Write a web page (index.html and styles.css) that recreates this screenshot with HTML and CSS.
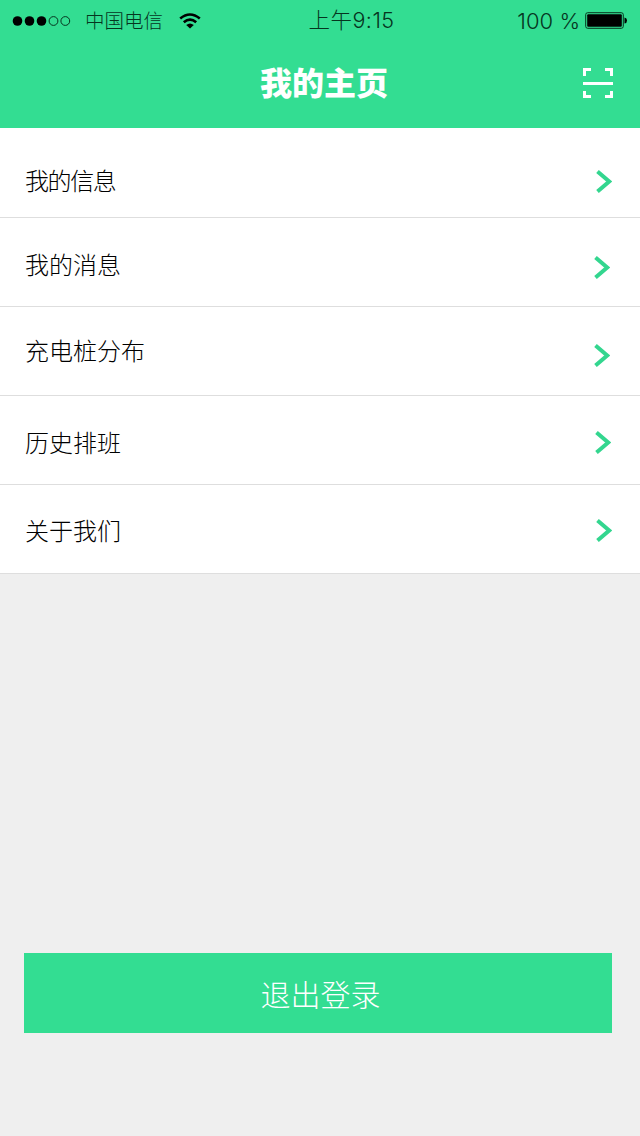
FILE: index.html
```
<!DOCTYPE html>
<html lang="zh-CN">
<head>
  <meta charset="UTF-8">
  <meta name="viewport" content="width=device-width, initial-scale=1.0">
  <title>我的主页</title>
  <link rel="stylesheet" href="styles.css">
</head>
<body>
<header>
  <!--状态栏-->
  <div class="status">
    <div class="carrier">
      <svg class="signal" width="60" height="12" viewBox="0 0 60 12">
        <circle cx="5.5" cy="6" r="4.8"/>
        <circle cx="17.5" cy="6" r="4.8"/>
        <circle cx="29.5" cy="6" r="4.8"/>
        <circle class="empty" cx="41.5" cy="6" r="4.4"/>
        <circle class="empty" cx="53.3" cy="6" r="4.4"/>
      </svg>
      <span class="operator">中国电信</span>
      <svg class="wifi" width="22" height="16" viewBox="0 0 22 16">
        <path d="M1.2 5.6Q11-2.6 20.8 5.6M4.8 9.3Q11 4 17.2 9.3"/>
        <path class="dot" d="M7.2 12Q11 9 14.8 12L11 15.6Z"/>
      </svg>
    </div>
    <span class="time">上午9:15</span>
    <div class="power">
      <span class="percent">100 %</span>
      <svg class="battery" width="43" height="17" viewBox="0 0 43 17">
        <rect class="shell" x=".7" y=".7" width="37.6" height="15.6" rx="2"/>
        <rect x="2.2" y="2.2" width="34.6" height="12.6" rx="1"/>
        <path d="M39.5 5.5Q42 6 42 8.5T39.5 11.5Z"/>
      </svg>
    </div>
  </div>
  <!--标题-->
  <div class="title">
    <h1>我的主页</h1>
    <a href="javascript:;" class="scan">
      <svg width="30" height="30" viewBox="0 0 30 30">
        <path d="M1.5 8V1.5H8M22 1.5H28.5V8M28.5 23V28.5H22M8 28.5H1.5V23M0 15.5H30"/>
      </svg>
    </a>
  </div>
</header>
<ul class="menu">
  <li class="info">
    <span>我的信息</span>
    <svg class="arrow" width="16" height="23" viewBox="0 0 16 23"><path d="M1.5 1.5L13.2 11.5L1.5 21.5"/></svg>
  </li>
  <li class="message">
    <span>我的消息</span>
    <svg class="arrow" width="16" height="23" viewBox="0 0 16 23"><path d="M1.5 1.5L13.2 11.5L1.5 21.5"/></svg>
  </li>
  <li class="station">
    <span>充电桩分布</span>
    <svg class="arrow" width="16" height="23" viewBox="0 0 16 23"><path d="M1.5 1.5L13.2 11.5L1.5 21.5"/></svg>
  </li>
  <li class="history">
    <span>历史排班</span>
    <svg class="arrow" width="16" height="23" viewBox="0 0 16 23"><path d="M1.5 1.5L13.2 11.5L1.5 21.5"/></svg>
  </li>
  <li class="about">
    <span>关于我们</span>
    <svg class="arrow" width="16" height="23" viewBox="0 0 16 23"><path d="M1.5 1.5L13.2 11.5L1.5 21.5"/></svg>
  </li>
</ul>
<a href="javascript:;" class="logout">退出登录</a>
</body>
</html>
```
FILE: styles.css
```
* {
  margin: 0;
  padding: 0;
  box-sizing: border-box;
}

body {
  min-height: 1136px;
  background: #efefef;
  font-family: "Noto Sans CJK SC", sans-serif;
  font-weight: 300;
  color: #000;
}

a {
  text-decoration: none;
}

svg {
  display: block;
  flex: none;
}

header {
  height: 128px;
  background: #33dd92;
}

/*状态栏*/
.status {
  display: grid;
  grid-template-columns: 1fr auto 1fr;
  height: 40px;
  padding: 0 12px;
  line-height: 40px;
  font-family: Inter, "Noto Sans CJK SC", sans-serif;
  font-size: 20px;
  color: #06351f;
}

.carrier,
.power {
  display: flex;
  align-items: center;
}

.signal .empty {
  fill: none;
  stroke: #06351f;
}

.operator {
  margin-left: 13px;
  padding-top: 1px;
  font-size: 19.5px;
}

.wifi {
  margin-left: 16px;
}

.wifi path {
  fill: none;
  stroke: #000;
  stroke-width: 2.6;
}

.wifi .dot {
  fill: #000;
  stroke: none;
}

.time {
  padding-left: 63px;
  font-size: 21.5px;
  letter-spacing: .5px;
}

.power {
  justify-content: flex-end;
}

.percent {
  margin-right: 5px;
  font-size: 22px;
}

.battery .shell {
  fill: none;
  stroke: #06351f;
}

/*标题*/
.title {
  display: grid;
  grid-template-columns: 1fr auto 1fr;
  align-items: center;
  height: 86px;
  padding: 0 27px 0 35px;
}

.title h1 {
  grid-column: 2;
  margin-bottom: 4px;
  font-size: 32px;
  font-weight: 900;
  line-height: 40px;
  color: #fff;
}

.scan {
  justify-self: end;
}

.scan path {
  fill: none;
  stroke: #fff;
  stroke-width: 3;
}

/*列表*/
.menu {
  list-style: none;
  background: #fff;
}

.menu li {
  display: flex;
  justify-content: space-between;
  align-items: flex-start;
  height: 89px;
  padding: 35px 29px 0 25px;
  border-bottom: 1px solid #dedede;
  font-size: 24px;
  line-height: 22px;
}

.arrow path {
  fill: none;
  stroke: #33d68f;
  stroke-width: 4;
}

.menu .info {
  height: 90px;
  padding-top: 41px;
  padding-right: 28px;
  letter-spacing: -1.4px;
}

.info .arrow {
  margin-top: 1px;
}

.menu .message {
  padding-right: 30px;
}

.message .arrow {
  margin-top: 3px;
}

.menu .station {
  padding-top: 32px;
  padding-right: 30px;
}

.station .arrow {
  margin-top: 5px;
}

.menu .about {
  padding-top: 34px;
  padding-right: 28px;
}

/*退出*/
.logout {
  display: block;
  width: 588px;
  height: 80px;
  margin: 379px 0 0 24.4px;
  padding-left: 4px;
  background: #33dd92;
  font-size: 30px;
  line-height: 80px;
  text-align: center;
  color: #fff;
}
```
